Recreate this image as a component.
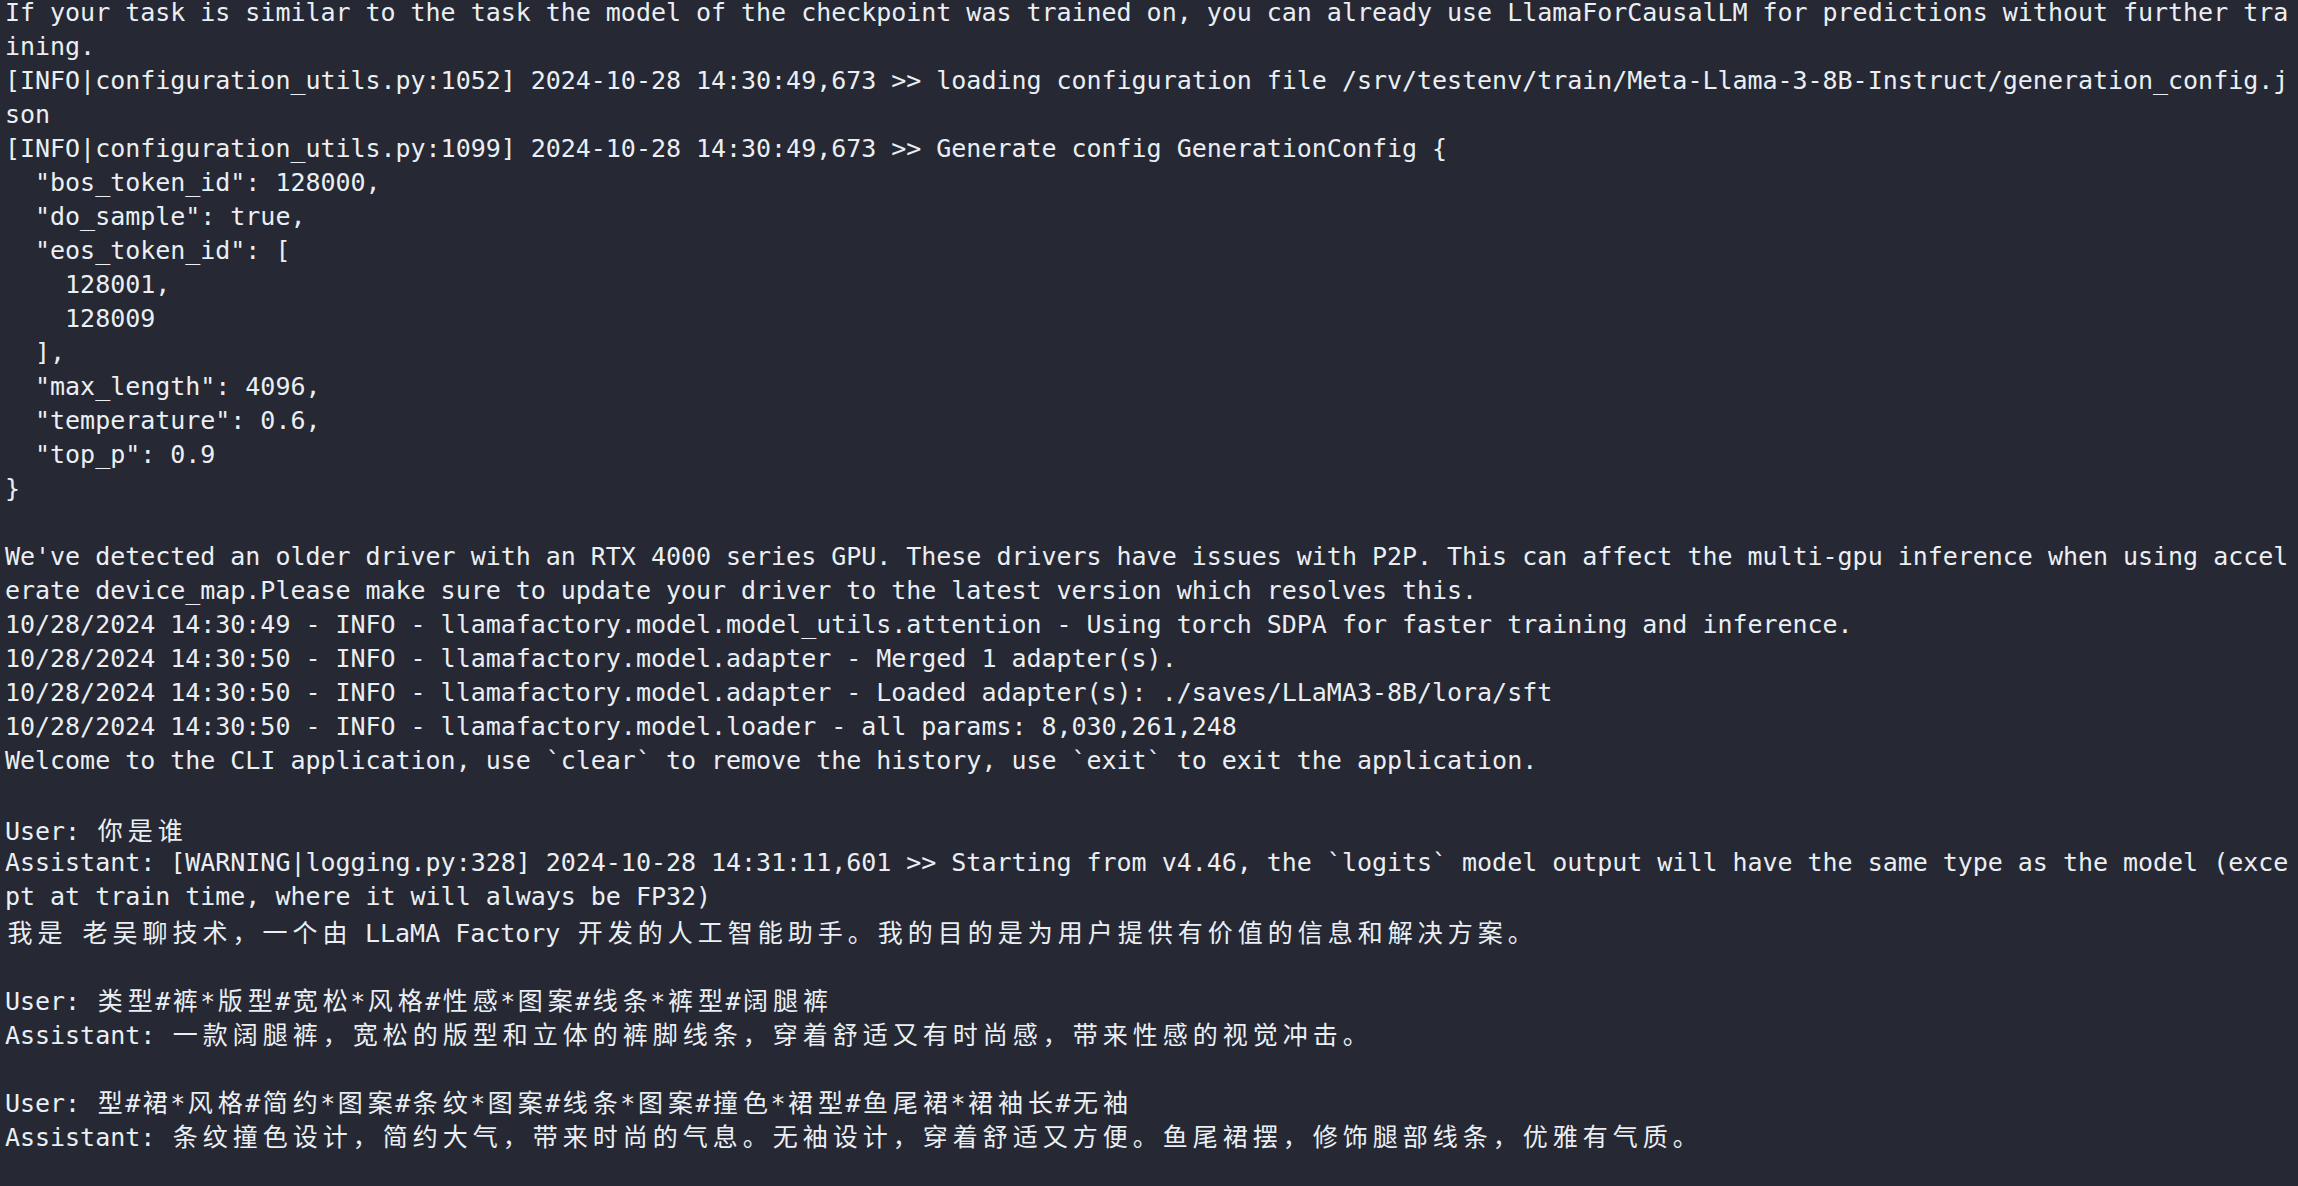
import React from 'react';

const LINES: string[] = [
  'If your task is similar to the task the model of the checkpoint was trained on, you can already use LlamaForCausalLM for predictions without further tra',
  'ining.',
  '[INFO|configuration_utils.py:1052] 2024-10-28 14:30:49,673 >> loading configuration file /srv/testenv/train/Meta-Llama-3-8B-Instruct/generation_config.j',
  'son',
  '[INFO|configuration_utils.py:1099] 2024-10-28 14:30:49,673 >> Generate config GenerationConfig {',
  '  "bos_token_id": 128000,',
  '  "do_sample": true,',
  '  "eos_token_id": [',
  '    128001,',
  '    128009',
  '  ],',
  '  "max_length": 4096,',
  '  "temperature": 0.6,',
  '  "top_p": 0.9',
  '}',
  '',
  "We've detected an older driver with an RTX 4000 series GPU. These drivers have issues with P2P. This can affect the multi-gpu inference when using accel",
  'erate device_map.Please make sure to update your driver to the latest version which resolves this.',
  '10/28/2024 14:30:49 - INFO - llamafactory.model.model_utils.attention - Using torch SDPA for faster training and inference.',
  '10/28/2024 14:30:50 - INFO - llamafactory.model.adapter - Merged 1 adapter(s).',
  '10/28/2024 14:30:50 - INFO - llamafactory.model.adapter - Loaded adapter(s): ./saves/LLaMA3-8B/lora/sft',
  '10/28/2024 14:30:50 - INFO - llamafactory.model.loader - all params: 8,030,261,248',
  'Welcome to the CLI application, use `clear` to remove the history, use `exit` to exit the application.',
  '',
  'User: 你是谁',
  'Assistant: [WARNING|logging.py:328] 2024-10-28 14:31:11,601 >> Starting from v4.46, the `logits` model output will have the same type as the model (exce',
  'pt at train time, where it will always be FP32)',
  '我是 老吴聊技术，一个由 LLaMA Factory 开发的人工智能助手。我的目的是为用户提供有价值的信息和解决方案。',
  '',
  'User: 类型#裤*版型#宽松*风格#性感*图案#线条*裤型#阔腿裤',
  'Assistant: 一款阔腿裤，宽松的版型和立体的裤脚线条，穿着舒适又有时尚感，带来性感的视觉冲击。',
  '',
  'User: 型#裙*风格#简约*图案#条纹*图案#线条*图案#撞色*裙型#鱼尾裙*裙袖长#无袖',
  'Assistant: 条纹撞色设计，简约大气，带来时尚的气息。无袖设计，穿着舒适又方便。鱼尾裙摆，修饰腿部线条，优雅有气质。',
];

// wide chars take two terminal cells
const isWide = (ch: string) => ch.charCodeAt(0) >= 0x2e80;

function TermLine({ text }: { text: string }) {
  const parts: React.ReactNode[] = [];
  let buf = '';
  Array.from(text).forEach((ch, i) => {
    if (isWide(ch)) {
      if (buf) {
        parts.push(buf);
        buf = '';
      }
      parts.push(
        <span
          key={i}
          className="inline-block w-[30px] text-center tracking-normal font-['Noto_Sans_CJK_SC',sans-serif]"
        >
          {ch}
        </span>
      );
    } else {
      buf += ch;
    }
  });
  if (buf) parts.push(buf);

  return <div className="h-[34px] leading-[26px] whitespace-pre">{parts}</div>;
}

export default function App() {
  return (
    <div className="w-[2298px] h-[1186px] bg-[#262833] text-[#eaeff3] overflow-hidden pl-[5px] font-['DejaVu_Sans_Mono','Liberation_Mono',monospace] text-[25px] tracking-[-0.03px]">
      {LINES.map((l, i) => (
        <TermLine key={i} text={l} />
      ))}
    </div>
  );
}
